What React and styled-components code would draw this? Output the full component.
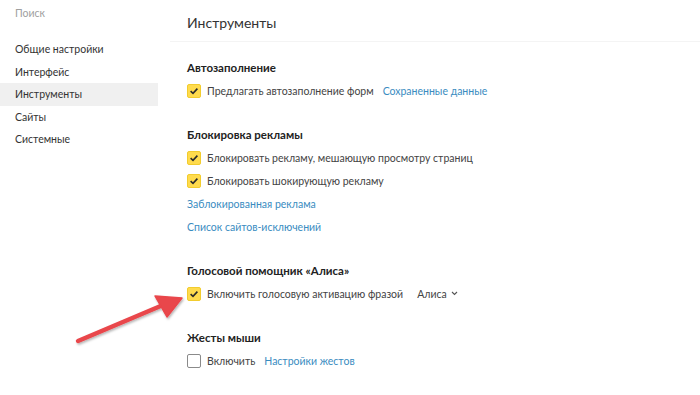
import React from "react";
import styled, { createGlobalStyle } from "styled-components";

const Global = createGlobalStyle`
  html, body {
    margin: 0;
    padding: 0;
    background: #fff;
  }
  body {
    font-family: Lato, "Noto Sans", sans-serif;
    color: #333;
  }
`;

const menu = ["Общие настройки", "Интерфейс", "Инструменты", "Сайты", "Системные"];

const Check = ({ checked }) => (
  <Box checked={checked}>
    {checked && (
      <svg width="10" height="10" viewBox="0 0 10 10">
        <path d="M1.6 5.2 L4 7.4 L8.4 2.6" fill="none" stroke="#2b2b2b" strokeWidth="1.6" />
      </svg>
    )}
  </Box>
);

const App = () => {
  return (
    <Page>
      <Global />
      <Sidebar>
        <Search>Поиск</Search>
        <Menu>
          {menu.map((item) => (
            <MenuItem key={item} active={item === "Инструменты"}>
              {item}
            </MenuItem>
          ))}
        </Menu>
      </Sidebar>
      <Content>
        <Header>
          <Title>Инструменты</Title>
        </Header>
        <Body>
          <Section>
            <Heading>Автозаполнение</Heading>
            <Row>
              <Check checked />
              <Label>Предлагать автозаполнение форм</Label>
              <Link spaced>Сохраненные данные</Link>
            </Row>
          </Section>
          <Section>
            <Heading>Блокировка рекламы</Heading>
            <Row>
              <Check checked />
              <Label>Блокировать рекламу, мешающую просмотру страниц</Label>
            </Row>
            <Row>
              <Check checked />
              <Label>Блокировать шокирующую рекламу</Label>
            </Row>
            <Row>
              <Link>Заблокированная реклама</Link>
            </Row>
            <Row>
              <Link>Список сайтов-исключений</Link>
            </Row>
          </Section>
          <Section>
            <Heading>Голосовой помощник «Алиса»</Heading>
            <Row>
              <Check checked />
              <Label>Включить голосовую активацию фразой</Label>
              <Select>
                Алиса
                <svg width="7" height="5" viewBox="0 0 7 5">
                  <path d="M1 1 L3.5 3.5 L6 1" fill="none" stroke="#555" strokeWidth="1.1" />
                </svg>
              </Select>
            </Row>
          </Section>
          <Section>
            <Heading>Жесты мыши</Heading>
            <Row>
              <Check />
              <Label>Включить</Label>
              <Link spaced>Настройки жестов</Link>
            </Row>
          </Section>
        </Body>
      </Content>
      <Arrow width="120" height="70" viewBox="0 0 120 70">
        <defs>
          <filter id="sh" x="-20%" y="-40%" width="140%" height="180%">
            <feDropShadow dx="1" dy="1.5" stdDeviation="1.2" floodColor="#000" floodOpacity="0.3" />
          </filter>
        </defs>
        <g filter="url(#sh)">
          <path d="M5 56 L90 20" stroke="#e9464b" strokeWidth="4.4" strokeLinecap="round" />
          <path d="M109 13 L82 11 L94 32 Z" fill="#e9464b" stroke="#e9464b" strokeWidth="1.5" strokeLinejoin="round" />
        </g>
      </Arrow>
    </Page>
  );
};

export default App;

const Page = styled.div`
  position: relative;
  display: flex;
  width: 700px;
  height: 395px;
  overflow: hidden;
  font-size: 10.5px;
`;

const Sidebar = styled.div`
  width: 170px;
  flex-shrink: 0;
`;

const Search = styled.div`
  padding-left: 15px;
  margin-top: 2px;
  height: 22px;
  line-height: 22px;
  color: #a0a0a0;
`;

const Menu = styled.div`
  margin-top: 14px;
  display: flex;
  flex-direction: column;
`;

const MenuItem = styled.div`
  width: 158px;
  box-sizing: border-box;
  padding-left: 15px;
  height: 22.5px;
  line-height: 22.5px;
  font-size: 10.5px;
  color: #333;
  background: ${(p) => (p.active ? "#f0f0f0" : "transparent")};
`;

const Content = styled.div`
  flex: 1;
`;

const Header = styled.div`
  height: 42px;
  box-sizing: border-box;
  border-bottom: 1px solid #f4f4f4;
  padding-left: 17px;
  display: flex;
  align-items: center;
`;

const Title = styled.div`
  font-size: 14px;
  color: #333;
  margin-top: 4px;
`;

const Body = styled.div`
  padding: 14px 0 0 17px;
  display: flex;
  flex-direction: column;
  gap: 21px;
`;

const Section = styled.div`
  display: flex;
  flex-direction: column;
`;

const Heading = styled.div`
  height: 23px;
  line-height: 23px;
  font-size: 11.5px;
  font-weight: 700;
  color: #222;
`;

const Row = styled.div`
  height: 23px;
  display: flex;
  align-items: center;
  gap: 6px;
  font-size: 10.5px;
`;

const Box = styled.div`
  width: 14px;
  height: 14px;
  box-sizing: border-box;
  border-radius: 2px;
  display: flex;
  align-items: center;
  justify-content: center;
  background: ${(p) => (p.checked ? "#ffdb4d" : "#fff")};
  border: 1px solid ${(p) => (p.checked ? "#f2cc2e" : "#8a8a8a")};
`;

const Label = styled.span`
  color: #444;
`;

const Link = styled.span`
  color: #3a8cbf;
  margin-left: ${(p) => (p.spaced ? "3px" : "0")};
`;

const Select = styled.span`
  margin-left: 8px;
  color: #444;
  display: inline-flex;
  align-items: center;
  gap: 4px;
`;

const Arrow = styled.svg`
  position: absolute;
  left: 73px;
  top: 285px;
  pointer-events: none;
`;
